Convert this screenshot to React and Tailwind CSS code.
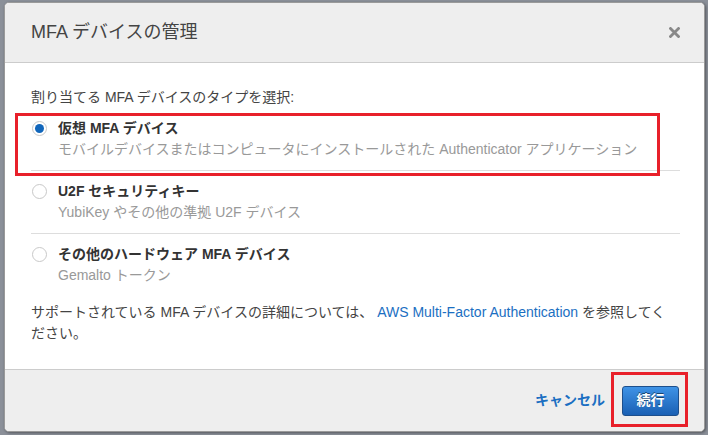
import React from "react";

const font = { fontFamily: '"Liberation Sans", "Noto Sans CJK JP", sans-serif' };

function Radio({ checked }) {
  return (
    <div className="w-[15px] h-[15px] rounded-full border border-[#c8c8c8] bg-white flex items-center justify-center shrink-0">
      {checked && <div className="w-[9px] h-[9px] rounded-full bg-[#1166bb]" />}
    </div>
  );
}

function Option({ checked, title, desc, last }) {
  return (
    <div className={"flex pt-[10px] pb-[10px] " + (last ? "" : "border-b border-[#dddddd]")}>
      <div className="w-[27px] pl-[1px] h-[21px] flex items-center">
        <Radio checked={checked} />
      </div>
      <div className="flex flex-col">
        <div className="text-[14px] leading-[21px] font-bold text-[#333333]">{title}</div>
        <div className="text-[14px] leading-[21px] text-[#999999]">{desc}</div>
      </div>
    </div>
  );
}

export default function App() {
  return (
    <div className="relative w-[708px] h-[435px] bg-[#8b9099] pt-[2px] pl-[4px] overflow-hidden" style={font}>
      <div className="w-[701px] h-[430px] bg-white border border-[#9a9a9a] rounded-[5px] overflow-hidden flex flex-col shadow-[1px_1px_3px_rgba(0,0,0,0.4)]">
        <div className="h-[60px] shrink-0 bg-[#eeeeee] border-b border-[#cccccc] flex items-center justify-between pl-[26px] pr-[24px]">
          <div className="text-[18px] text-[#444444]">MFA デバイスの管理</div>
          <svg width="11" height="11" viewBox="0 0 11 11">
            <path d="M1.5 1.5 L9.5 9.5 M9.5 1.5 L1.5 9.5" stroke="#888888" strokeWidth="2.8" strokeLinecap="square" />
          </svg>
        </div>
        <div className="flex-1 pt-[24px] pl-[26px] pr-[24px] pb-[25px] flex flex-col">
          <div className="text-[14px] leading-[21px] text-[#444444]">割り当てる MFA デバイスのタイプを選択:</div>
          <Option
            checked
            title="仮想 MFA デバイス"
            desc="モバイルデバイスまたはコンピュータにインストールされた Authenticator アプリケーション"
          />
          <Option title="U2F セキュリティキー" desc="YubiKey やその他の準拠 U2F デバイス" />
          <Option last title="その他のハードウェア MFA デバイス" desc="Gemalto トークン" />
          <div className="mt-[6px] text-[14px] leading-[21px] text-[#444444]">
            <span className="whitespace-nowrap">
              サポートされている MFA デバイスの詳細については、 <span className="text-[#1b6fc2]">AWS Multi-Factor Authentication</span> を参照してく
            </span>
            <br />
            ださい。
          </div>
        </div>
        <div className="h-[62px] shrink-0 bg-[#eeeeee] border-t border-[#cccccc] flex items-center justify-end pr-[25px]">
          <span className="text-[14px] font-bold text-[#1b6fc2] mr-[17px]">キャンセル</span>
          <button className="w-[57px] h-[30px] rounded-[3px] border border-[#1d4f8c] bg-gradient-to-b from-[#3f93e6] to-[#1a60b4] text-white text-[14px] font-bold [text-shadow:0_-1px_0_rgba(0,0,0,0.5)]">
            続行
          </button>
        </div>
      </div>
      <div className="absolute left-[15px] top-[113px] w-[645px] h-[63px] border-[3px] border-[#e8202a]" />
      <div className="absolute left-[611px] top-[372px] w-[77px] h-[55px] border-[3px] border-[#e8202a]" />
    </div>
  );
}
